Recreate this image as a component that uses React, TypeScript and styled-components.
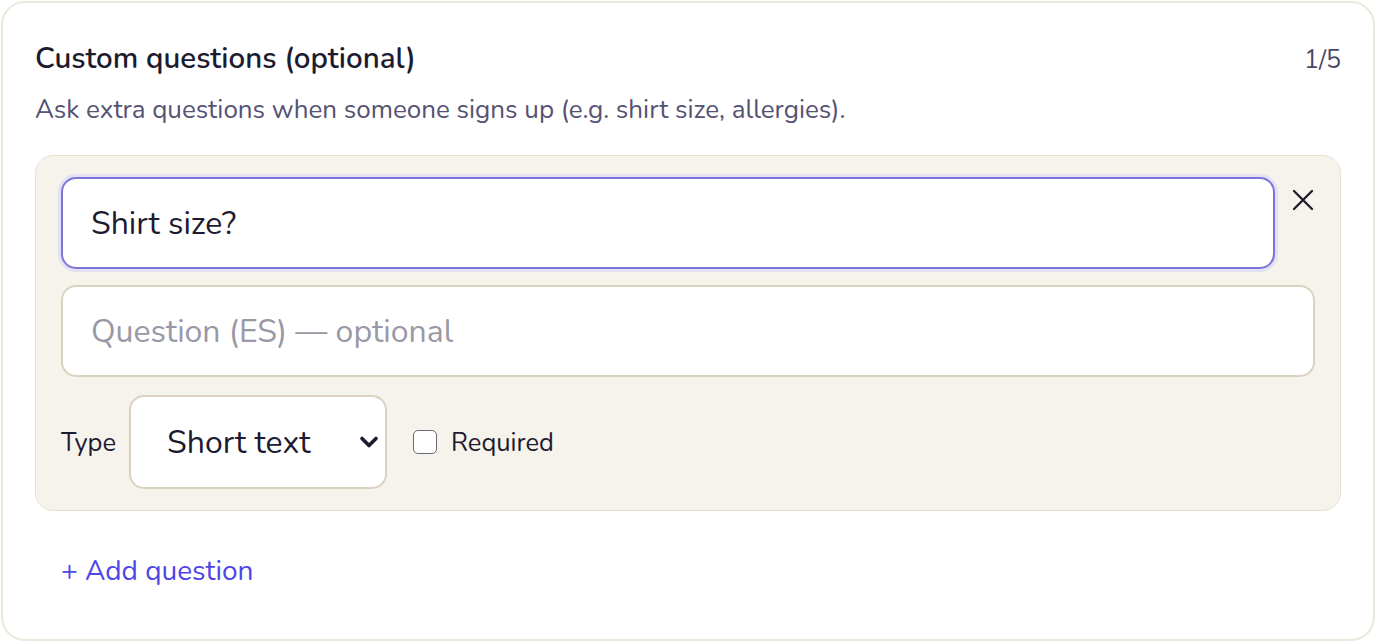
import React from 'react'
import styled, { createGlobalStyle } from 'styled-components'

const GlobalStyle = createGlobalStyle`
    html, body {
        margin: 0;
        padding: 0;
        background: #ffffff;
    }
    body {
        font-family: 'Nunito', 'Open Sans', 'Noto Sans', sans-serif;
        color: #1d1b2f;
    }
    * {
        box-sizing: border-box;
    }
`

const Page = styled.div`
    padding: 1px;
`

const Card = styled.section`
    height: 640px;
    border: 2px solid #ede8dc;
    border-radius: 24px;
    background: #ffffff;
    padding: 32px 32px 0;
    display: flex;
    flex-direction: column;
`

const Header = styled.div`
    display: flex;
    justify-content: space-between;
    align-items: baseline;
    margin-top: 6px;
`

const Title = styled.h2`
    margin: 0;
    font-size: 29.5px;
    font-weight: 600;
    line-height: 34px;
    color: #1d1b2f;
`

const Counter = styled.span`
    font-size: 25px;
    color: #4b4866;
`

const Description = styled.p`
    margin: 18px 0 0;
    font-size: 26px;
    line-height: 30px;
    color: #555273;
`

const QuestionPanel = styled.div`
    margin-top: 30px;
    background: #f6f3ec;
    border: 1px solid #e6e0d0;
    border-radius: 18px;
    padding: 21px 25px 21px;
    display: flex;
    flex-direction: column;
    gap: 16px;
`

const InputRow = styled.div`
    display: flex;
    align-items: flex-start;
    gap: 16px;
`

const TextInput = styled.input<{ $focused?: boolean }>`
    flex: 1 1 auto;
    width: 100%;
    height: 92px;
    padding: 0 28px;
    border-radius: 15px;
    border: 2px solid ${({ $focused }) => ($focused ? '#7d75dc' : '#d9d2c0')};
    box-shadow: ${({ $focused }) =>
        $focused ? '0 0 0 3px #e4e1f2' : 'none'};
    background: #ffffff;
    font-family: inherit;
    font-size: 32px;
    color: #1d1b2f;
    outline: none;

    &::placeholder {
        color: #9a98a6;
    }
`

const RemoveButton = styled.button`
    flex: none;
    width: 24px;
    height: 24px;
    margin-top: 11px;
    padding: 0;
    border: none;
    background: transparent;
    color: #1d1b2f;
    display: flex;
    align-items: center;
    justify-content: center;
    cursor: pointer;
`

const OptionsRow = styled.div`
    display: flex;
    align-items: center;
    margin-top: 2px;
`

const FieldLabel = styled.label`
    font-size: 25.5px;
    color: #1d1b2f;
    margin-right: 13px;
`

const SelectWrap = styled.div`
    position: relative;
    width: 258px;
    height: 94px;
`

const Select = styled.select`
    width: 100%;
    height: 100%;
    appearance: none;
    padding: 0 36px 0 36px;
    border: 2px solid #d9d2c0;
    border-radius: 15px;
    background: #ffffff;
    font-family: inherit;
    font-size: 32px;
    color: #1d1b2f;
    outline: none;
`

const Chevron = styled.svg`
    position: absolute;
    right: 8px;
    top: 50%;
    transform: translateY(-50%);
    pointer-events: none;
`

const CheckLabel = styled.label`
    display: flex;
    align-items: center;
    gap: 14px;
    margin-left: 26px;
    font-size: 25.5px;
    color: #1d1b2f;
`

const Checkbox = styled.span`
    width: 24px;
    height: 24px;
    border: 1.5px solid #6b6a72;
    border-radius: 5px;
    background: #ffffff;
`

const AddButton = styled.button`
    align-self: flex-start;
    margin-top: 40px;
    padding: 0 0 0 26px;
    border: none;
    background: transparent;
    font-family: inherit;
    font-size: 28px;
    line-height: 40px;
    color: #4f46e5;
    cursor: pointer;
`

export default function App() {
    return (
        <>
            <GlobalStyle />
            <Page>
                <Card>
                    <Header>
                        <Title>Custom questions (optional)</Title>
                        <Counter>1/5</Counter>
                    </Header>
                    <Description>
                        Ask extra questions when someone signs up (e.g. shirt
                        size, allergies).
                    </Description>
                    <QuestionPanel>
                        <InputRow>
                            <TextInput $focused defaultValue="Shirt size?" />
                            <RemoveButton aria-label="Remove question">
                                <svg
                                    width="22"
                                    height="22"
                                    viewBox="0 0 22 22"
                                    fill="none"
                                    stroke="currentColor"
                                    strokeWidth="2.3"
                                    strokeLinecap="round"
                                >
                                    <path d="M2 2L20 20M20 2L2 20" />
                                </svg>
                            </RemoveButton>
                        </InputRow>
                        <TextInput placeholder="Question (ES) — optional" />
                        <OptionsRow>
                            <FieldLabel>Type</FieldLabel>
                            <SelectWrap>
                                <Select defaultValue="short">
                                    <option value="short">Short text</option>
                                    <option value="long">Long text</option>
                                </Select>
                                <Chevron
                                    width="20"
                                    height="13"
                                    viewBox="0 0 20 13"
                                    fill="none"
                                    stroke="#1d1b2f"
                                    strokeWidth="3.6"
                                    strokeLinecap="round"
                                    strokeLinejoin="round"
                                >
                                    <path d="M3 3L10 10L17 3" />
                                </Chevron>
                            </SelectWrap>
                            <CheckLabel>
                                <Checkbox />
                                Required
                            </CheckLabel>
                        </OptionsRow>
                    </QuestionPanel>
                    <AddButton>+ Add question</AddButton>
                </Card>
            </Page>
        </>
    )
}
